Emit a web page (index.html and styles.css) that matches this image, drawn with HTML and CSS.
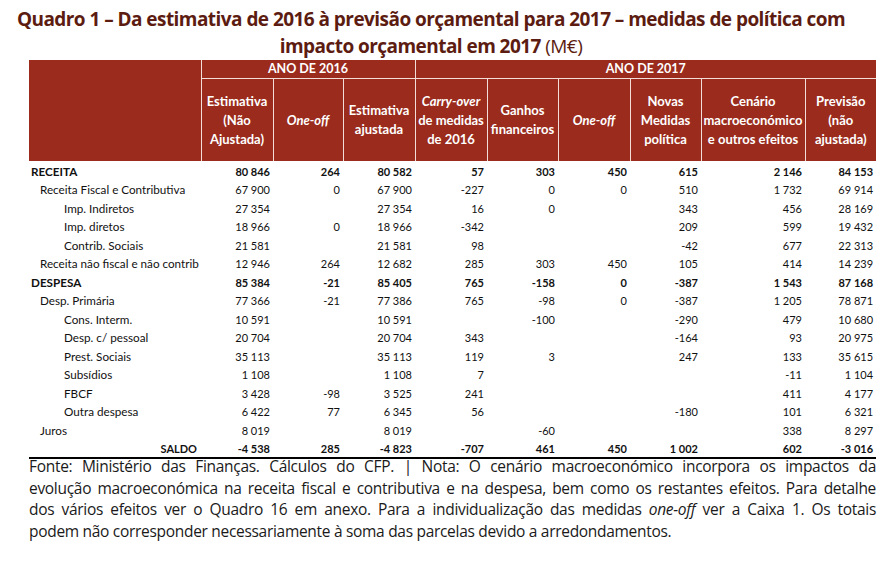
FILE: index.html
```html
<!DOCTYPE html>
<html lang="pt">
<head>
<meta charset="utf-8">
<title>Quadro 1</title>
<link rel="stylesheet" href="styles.css">
</head>
<body>
<div class="page">
  <h1 class="title">Quadro 1 – Da estimativa de 2016 à previsão orçamental para 2017 – medidas de política com<br>impacto orçamental em 2017 <span class="unit">(M€)</span></h1>
  <table class="quadro">
    <colgroup>
      <col class="c-lbl"><col class="c-72"><col class="c-70"><col class="c-72"><col class="c-72"><col class="c-71"><col class="c-72"><col class="c-71"><col class="c-104"><col class="c-71">
    </colgroup>
    <thead>
      <tr class="h1">
        <th rowspan="2" class="corner"></th>
        <th colspan="3">ANO DE 2016</th>
        <th colspan="6">ANO DE 2017</th>
      </tr>
      <tr class="h2">
        <th>Estimativa<br>(Não<br>Ajustada)</th>
        <th><i>One-off</i></th>
        <th>Estimativa<br>ajustada</th>
        <th><i>Carry-over</i><br>de medidas<br>de 2016</th>
        <th>Ganhos<br>financeiros</th>
        <th><i>One-off</i></th>
        <th>Novas<br>Medidas<br>política</th>
        <th>Cenário<br>macroeconómico<br>e outros efeitos</th>
        <th>Previsão<br>(não<br>ajustada)</th>
      </tr>
    </thead>
    <tbody>
      <tr class="b"><td class="lbl">RECEITA</td><td>80&nbsp;846</td><td>264</td><td>80&nbsp;582</td><td>57</td><td>303</td><td>450</td><td>615</td><td>2&nbsp;146</td><td>84&nbsp;153</td></tr>
      <tr><td class="lbl l1">Receita Fiscal e Contributiva</td><td>67&nbsp;900</td><td>0</td><td>67&nbsp;900</td><td>-227</td><td>0</td><td>0</td><td>510</td><td>1&nbsp;732</td><td>69&nbsp;914</td></tr>
      <tr><td class="lbl l2">Imp. Indiretos</td><td>27&nbsp;354</td><td></td><td>27&nbsp;354</td><td>16</td><td>0</td><td></td><td>343</td><td>456</td><td>28&nbsp;169</td></tr>
      <tr><td class="lbl l2">Imp. diretos</td><td>18&nbsp;966</td><td>0</td><td>18&nbsp;966</td><td>-342</td><td></td><td></td><td>209</td><td>599</td><td>19&nbsp;432</td></tr>
      <tr><td class="lbl l2">Contrib. Sociais</td><td>21&nbsp;581</td><td></td><td>21&nbsp;581</td><td>98</td><td></td><td></td><td>-42</td><td>677</td><td>22&nbsp;313</td></tr>
      <tr><td class="lbl l1">Receita não fiscal e não contrib</td><td>12&nbsp;946</td><td>264</td><td>12&nbsp;682</td><td>285</td><td>303</td><td>450</td><td>105</td><td>414</td><td>14&nbsp;239</td></tr>
      <tr class="b"><td class="lbl">DESPESA</td><td>85&nbsp;384</td><td>-21</td><td>85&nbsp;405</td><td>765</td><td>-158</td><td>0</td><td>-387</td><td>1&nbsp;543</td><td>87&nbsp;168</td></tr>
      <tr><td class="lbl l1">Desp. Primária</td><td>77&nbsp;366</td><td>-21</td><td>77&nbsp;386</td><td>765</td><td>-98</td><td>0</td><td>-387</td><td>1&nbsp;205</td><td>78&nbsp;871</td></tr>
      <tr><td class="lbl l2">Cons. Interm.</td><td>10&nbsp;591</td><td></td><td>10&nbsp;591</td><td></td><td>-100</td><td></td><td>-290</td><td>479</td><td>10&nbsp;680</td></tr>
      <tr><td class="lbl l2">Desp. c/ pessoal</td><td>20&nbsp;704</td><td></td><td>20&nbsp;704</td><td>343</td><td></td><td></td><td>-164</td><td>93</td><td>20&nbsp;975</td></tr>
      <tr><td class="lbl l2">Prest. Sociais</td><td>35&nbsp;113</td><td></td><td>35&nbsp;113</td><td>119</td><td>3</td><td></td><td>247</td><td>133</td><td>35&nbsp;615</td></tr>
      <tr><td class="lbl l2">Subsídios</td><td>1&nbsp;108</td><td></td><td>1&nbsp;108</td><td>7</td><td></td><td></td><td></td><td>-11</td><td>1&nbsp;104</td></tr>
      <tr><td class="lbl l2">FBCF</td><td>3&nbsp;428</td><td>-98</td><td>3&nbsp;525</td><td>241</td><td></td><td></td><td></td><td>411</td><td>4&nbsp;177</td></tr>
      <tr><td class="lbl l2">Outra despesa</td><td>6&nbsp;422</td><td>77</td><td>6&nbsp;345</td><td>56</td><td></td><td></td><td>-180</td><td>101</td><td>6&nbsp;321</td></tr>
      <tr><td class="lbl l1">Juros</td><td>8&nbsp;019</td><td></td><td>8&nbsp;019</td><td></td><td>-60</td><td></td><td></td><td>338</td><td>8&nbsp;297</td></tr>
      <tr class="b saldo"><td class="lbl">SALDO</td><td>-4&nbsp;538</td><td>285</td><td>-4&nbsp;823</td><td>-707</td><td>461</td><td>450</td><td>1&nbsp;002</td><td>602</td><td>-3&nbsp;016</td></tr>
    </tbody>
  </table>
  <p class="nota">
    <span class="ln">Fonte: Ministério das Finanças. Cálculos do CFP. | Nota: O cenário macroeconómico incorpora os impactos da</span>
    <span class="ln">evolução macroeconómica na receita fiscal e contributiva e na despesa, bem como os restantes efeitos. Para detalhe</span>
    <span class="ln">dos vários efeitos ver o Quadro 16 em anexo. Para a individualização das medidas <i>one-off</i> ver a Caixa 1. Os totais</span>
    <span class="ln last">podem não corresponder necessariamente à soma das parcelas devido a arredondamentos.</span>
  </p>
</div>
</body>
</html>
```

FILE: styles.css
```css
html, body {
  margin: 0;
  padding: 0;
  background: #ffffff;
}

body {
  font-family: "Lato", "Liberation Sans", sans-serif;
  color: #000000;
}

.page {
  width: 896px;
  height: 561px;
  overflow: hidden;
}

.title {
  width: 862px;
  margin: 6px 0 0 0;
  text-align: center;
  font-family: "Open Sans", "Liberation Sans", sans-serif;
  font-weight: 700;
  font-size: 19px;
  line-height: 27px;
  letter-spacing: -0.55px;
  color: #5c1c11;
}

.title .unit {
  font-weight: 400;
}

.quadro {
  margin-left: 29px;
  width: 847px;
  border-collapse: collapse;
  table-layout: fixed;
}

.c-lbl { width: 172px; }
.c-70 { width: 70px; }
.c-71 { width: 71px; }
.c-72 { width: 72px; }
.c-104 { width: 104px; }

.quadro th {
  background: #9a2b1d;
  color: #ffffff;
  font-weight: 700;
  font-size: 13px;
  line-height: 19px;
  text-align: center;
  vertical-align: middle;
  padding: 0;
  border-left: 1px solid #f3ddd8;
  border-bottom: 1px solid #f3ddd8;
  white-space: nowrap;
}

.quadro th.corner {
  border-left: none;
  border-bottom: none;
}

.quadro .h1 th {
  height: 18px;
  line-height: 18px;
  font-size: 12.5px;
}

.quadro .h2 th {
  height: 82px;
  border-bottom: none;
}

.quadro tbody tr {
  height: 18.5px;
}

.quadro td {
  font-size: 11px;
  line-height: 17px;
  padding: 1.5px 3px 0 0;
  text-align: right;
  white-space: nowrap;
  color: #111111;
}

.quadro td.lbl {
  text-align: left;
  padding-left: 2px;
  font-size: 11.7px;
}

.quadro td.l1 { padding-left: 11px; }
.quadro td.l2 { padding-left: 35px; }

.quadro tr.b td {
  font-weight: 700;
}

.quadro tr.saldo td {
  border-bottom: 2px solid #000000;
}

.quadro tr.saldo td.lbl {
  text-align: right;
  padding-right: 4px;
  font-size: 11px;
}

.nota {
  margin: -3px 0 0 29px;
  width: 847px;
  font-family: "Open Sans", "Liberation Sans", sans-serif;
  font-size: 15.5px;
  line-height: 21.5px;
  letter-spacing: -0.3px;
  color: #1a1a1a;
}

.nota .ln {
  display: block;
  text-align: justify;
  text-align-last: justify;
}

.nota .ln.last {
  text-align: left;
  text-align-last: left;
}
```
